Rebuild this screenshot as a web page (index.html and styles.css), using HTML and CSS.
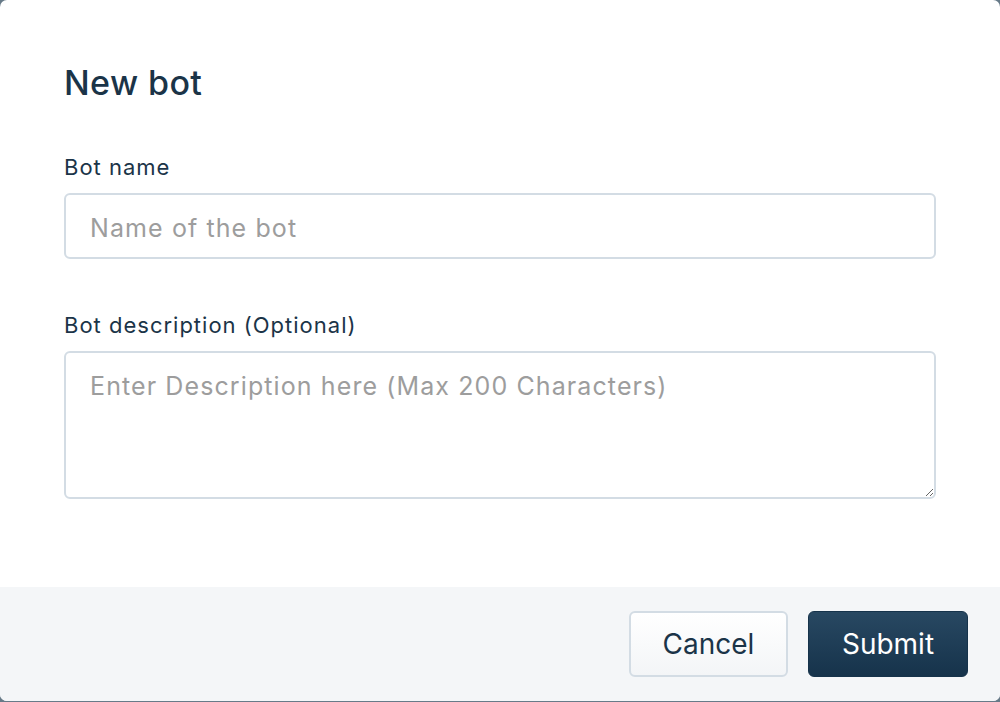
FILE: index.html
```html
<!DOCTYPE html>
<html>
<head>
<meta charset="utf-8">
<link rel="stylesheet" href="styles.css">
</head>
<body>
<div class="modal">
  <div class="modal-body">
    <h1 class="title">New bot</h1>
    <label class="label">Bot name</label>
    <input class="input" type="text" placeholder="Name of the bot">
    <label class="label label-desc">Bot description (Optional)</label>
    <textarea class="textarea" placeholder="Enter Description here (Max 200 Characters)"></textarea>
  </div>
  <div class="modal-footer">
    <button class="btn btn-cancel">Cancel</button>
    <button class="btn btn-submit">Submit</button>
  </div>
</div>
</body>
</html>
```
FILE: styles.css
```css
html, body {
  margin: 0;
  padding: 0;
  height: 702px;
  background: #677a88;
  font-family: Inter, "Helvetica Neue", Arial, sans-serif;
  overflow: hidden;
}
.modal {
  width: 1000px;
  height: 701px;
  background: #fff;
  border-radius: 7px;
  overflow: hidden;
  display: flex;
  flex-direction: column;
}
.modal-body {
  flex: 1;
  padding: 62px 64px 0 64px;
  display: flex;
  flex-direction: column;
}
.title {
  margin: 0;
  font-size: 34px;
  font-weight: 500;
  color: #1b3448;
  line-height: 42px;
  letter-spacing: 0.4px;
}
.label {
  margin-top: 50px;
  font-size: 22px;
  color: #1b3448;
  line-height: 26px;
  letter-spacing: 1px;
}
.label-desc {
  margin-top: 53px;
}
.input, .textarea {
  box-sizing: border-box;
  width: 872px;
  margin-top: 13px;
  border: 2px solid #d3dce4;
  border-radius: 6px;
  background: #fff;
  font-family: inherit;
  font-size: 25px;
  letter-spacing: 1.1px;
  color: #1b3448;
  padding: 0 24px;
  outline: none;
}
.input {
  height: 66px;
  padding-top: 3px;
}
.textarea {
  height: 148px;
  padding-top: 17px;
  resize: vertical;
  line-height: 32px;
}
.input::placeholder, .textarea::placeholder {
  color: #9d9d9d;
}
.modal-footer {
  height: 114px;
  background: #f4f6f8;
  display: flex;
  justify-content: flex-end;
  align-items: flex-start;
  gap: 20px;
  padding: 24px 32px 0 0;
  box-sizing: border-box;
}
.btn {
  height: 66px;
  border-radius: 6px;
  font-family: inherit;
  font-size: 28px;
  padding: 0;
  cursor: pointer;
}
.btn-cancel {
  width: 159px;
  background: linear-gradient(#ffffff, #f3f5f7);
  border: 2px solid #d3dce4;
  color: #1b3448;
}
.btn-submit {
  width: 160px;
  background: linear-gradient(#284862, #16334b);
  border: 1px solid #16334b;
  color: #fff;
}
```
